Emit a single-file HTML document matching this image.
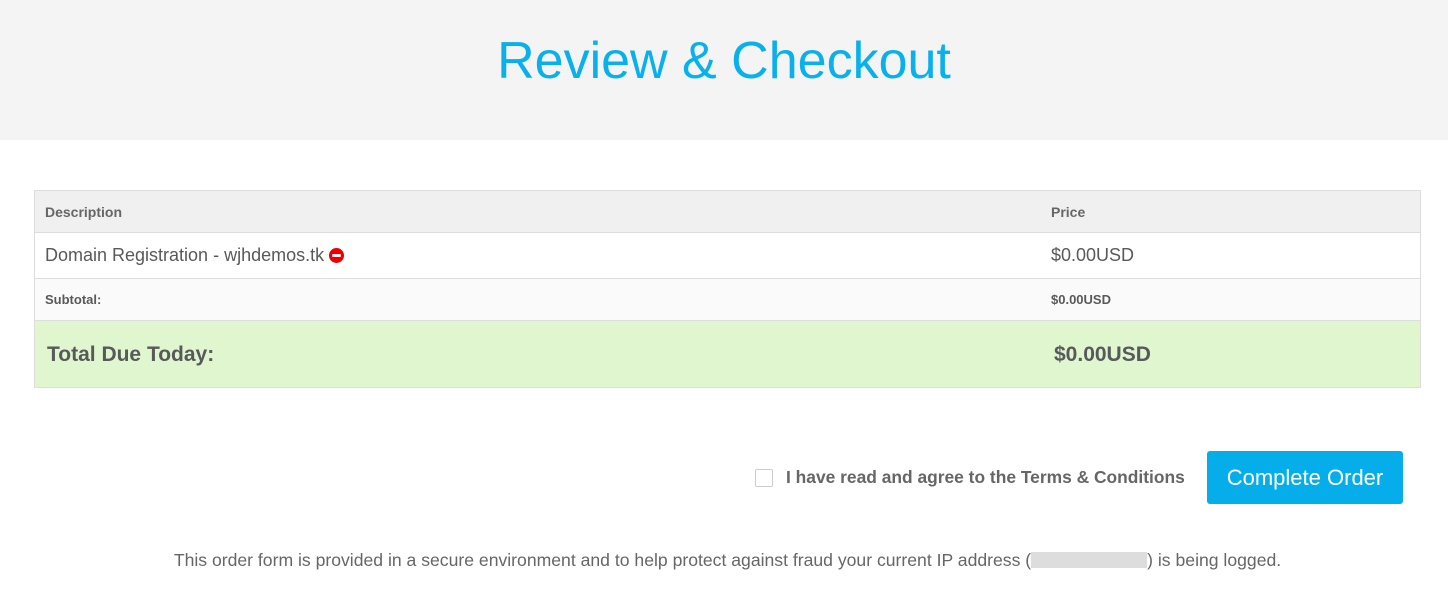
<!DOCTYPE html>
<html><head><style>
body{margin:0;width:1448px;height:597px;background:#fff;font-family:"Liberation Sans",sans-serif;color:#58595b;position:relative;overflow:hidden}
.hdr{position:absolute;left:0;top:0;width:1448px;height:140px;background:#f4f4f4}
.hdr h1{margin:0;position:absolute;top:31px;width:100%;text-align:center;font-weight:300;font-size:52px;color:#08b1ec;letter-spacing:0px}
.tbl{position:absolute;left:34px;top:190px;width:1385px;border:1px solid #ddd}
.row{position:relative;border-bottom:1px solid #ddd;box-sizing:border-box}
.row:last-child{border-bottom:none}
.row span{position:absolute;white-space:nowrap}
.c2{left:1016px}
</style></head><body>
<div class="hdr"><h1>Review &amp; Checkout</h1></div>
<div class="tbl">
 <div class="row" style="height:42px;background:#f0f0f0;font-weight:bold;font-size:14px;color:#666">
  <span style="left:10px;top:13px">Description</span><span class="c2" style="top:13px">Price</span></div>
 <div class="row" style="height:46px;font-size:18px">
  <span style="left:10px;top:12px">Domain Registration - wjhdemos.tk <svg width="15" height="15" viewBox="0 0 16 16" style="vertical-align:-2px"><circle cx="8" cy="8" r="8" fill="#e00"/><rect x="3.5" y="6.5" width="9" height="3" fill="#fff"/></svg></span>
  <span class="c2" style="top:12px">$0.00USD</span></div>
 <div class="row" style="height:42px;background:#fafafa;font-weight:bold;font-size:13px">
  <span style="left:10px;top:13px">Subtotal:</span><span class="c2" style="top:13px">$0.00USD</span></div>
 <div class="row" style="height:66px;background:#dff6cf;font-weight:bold;font-size:21px">
  <span style="left:12px;top:22px">Total Due Today:</span><span class="c2" style="left:1019px;top:22px">$0.00USD</span></div>
</div>
<div style="position:absolute;left:755px;top:469px;width:18px;height:18px;border:1px solid #ccc;border-radius:2px;box-sizing:border-box"></div>
<div style="position:absolute;left:786px;top:467px;font-size:17.4px;font-weight:bold;color:#666;white-space:nowrap">I have read and agree to the Terms &amp; Conditions</div>
<div style="position:absolute;left:1207px;top:451px;width:196px;height:53px;background:#05aeea;border-radius:3px;color:#fff;font-size:22px;text-align:center;line-height:53px">Complete Order</div>
<div style="position:absolute;left:0;width:1455px;top:550px;text-align:center;font-size:17.6px;color:#666;font-weight:300;white-space:nowrap">This order form is provided in a secure environment and to help protect against fraud your current IP address (<span style="display:inline-block;width:116px;height:16px;background:#ddd;vertical-align:-2px"></span>) is being logged.</div>
</body></html>
